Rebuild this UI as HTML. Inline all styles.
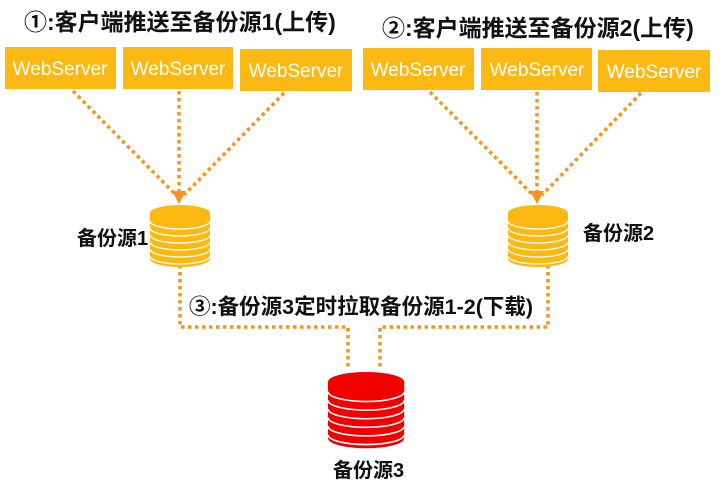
<!DOCTYPE html>
<html><head><meta charset="utf-8"><style>
body{margin:0;background:#fff;}
svg text{font-family:"Liberation Sans","Noto Sans CJK SC",sans-serif;font-weight:bold;}
</style></head><body>
<svg width="724" height="485" viewBox="0 0 724 485" xmlns="http://www.w3.org/2000/svg">
<defs>
<g id="cyl">
 <rect x="0" y="8" width="60" height="46" />
 <ellipse cx="30" cy="54" rx="30" ry="8"/>
 <ellipse cx="30" cy="8" rx="30" ry="8"/>
 <g fill="none" stroke="#fff" stroke-width="1.3">
  <path d="M0 16 A30 8 0 0 0 60 16"/>
  <path d="M0 23 A30 8 0 0 0 60 23"/>
  <path d="M0 30 A30 8 0 0 0 60 30"/>
  <path d="M0 37 A30 8 0 0 0 60 37"/>
  <path d="M0 44 A30 8 0 0 0 60 44"/>
  <path d="M0 51 A30 8 0 0 0 60 51"/>
 </g>
</g>
</defs>
<text x="24" y="30" font-size="23" fill="#111">①:客户端推送至备份源1(上传)</text>
<text x="382" y="36" font-size="23" fill="#111">②:客户端推送至备份源2(上传)</text>
<g fill="#fdb913">
<rect x="5" y="47" width="111" height="42"/>
<rect x="123" y="47" width="110" height="42"/>
<rect x="240" y="49" width="112" height="42"/>
<rect x="363" y="48" width="111" height="42"/>
<rect x="481" y="48" width="111" height="42"/>
<rect x="598" y="50" width="112" height="42"/>
</g>
<g fill="#fff" font-size="19" text-anchor="middle">
<text x="60" y="75" style="font-weight:normal">WebServer</text>
<text x="178" y="75" style="font-weight:normal">WebServer</text>
<text x="296" y="77" style="font-weight:normal">WebServer</text>
<text x="418" y="76" style="font-weight:normal">WebServer</text>
<text x="537" y="76" style="font-weight:normal">WebServer</text>
<text x="654" y="78" style="font-weight:normal">WebServer</text>
</g>
<g stroke="#f7941d" stroke-width="3.5" stroke-dasharray="3.5 3.5" fill="none">
<path d="M73 91 L176 195"/>
<path d="M179 91 L179 193"/>
<path d="M284 93 L184 195"/>
<path d="M430 92 L533 195"/>
<path d="M537 92 L537 193"/>
<path d="M641 93 L542 195"/>
<path d="M180 265 L180 327 L348 327 L348 369"/>
<path d="M548 265 L548 327 L380 327 L380 369"/>
</g>
<g fill="#f7941d">
<path d="M172 191 L186 191 L179 204 Z"/>
<path d="M530 191 L544 191 L537 204 Z"/>
</g>
<g fill="#fdb913"><use href="#cyl" x="150" y="205"/><use href="#cyl" x="508" y="205"/></g>
<g fill="#f20000"><use href="#cyl" x="328" y="372" transform="translate(328 372) scale(1.27 1.23) translate(-328 -372)"/></g>
<text x="77" y="245" font-size="20" fill="#111">备份源1</text>
<text x="583" y="240" font-size="20" fill="#111">备份源2</text>
<text x="189" y="314" font-size="21.5" fill="#111">③:备份源3定时拉取备份源1-2(下载)</text>
<text x="333" y="477" font-size="20" fill="#111">备份源3</text>
</svg>
</body></html>
